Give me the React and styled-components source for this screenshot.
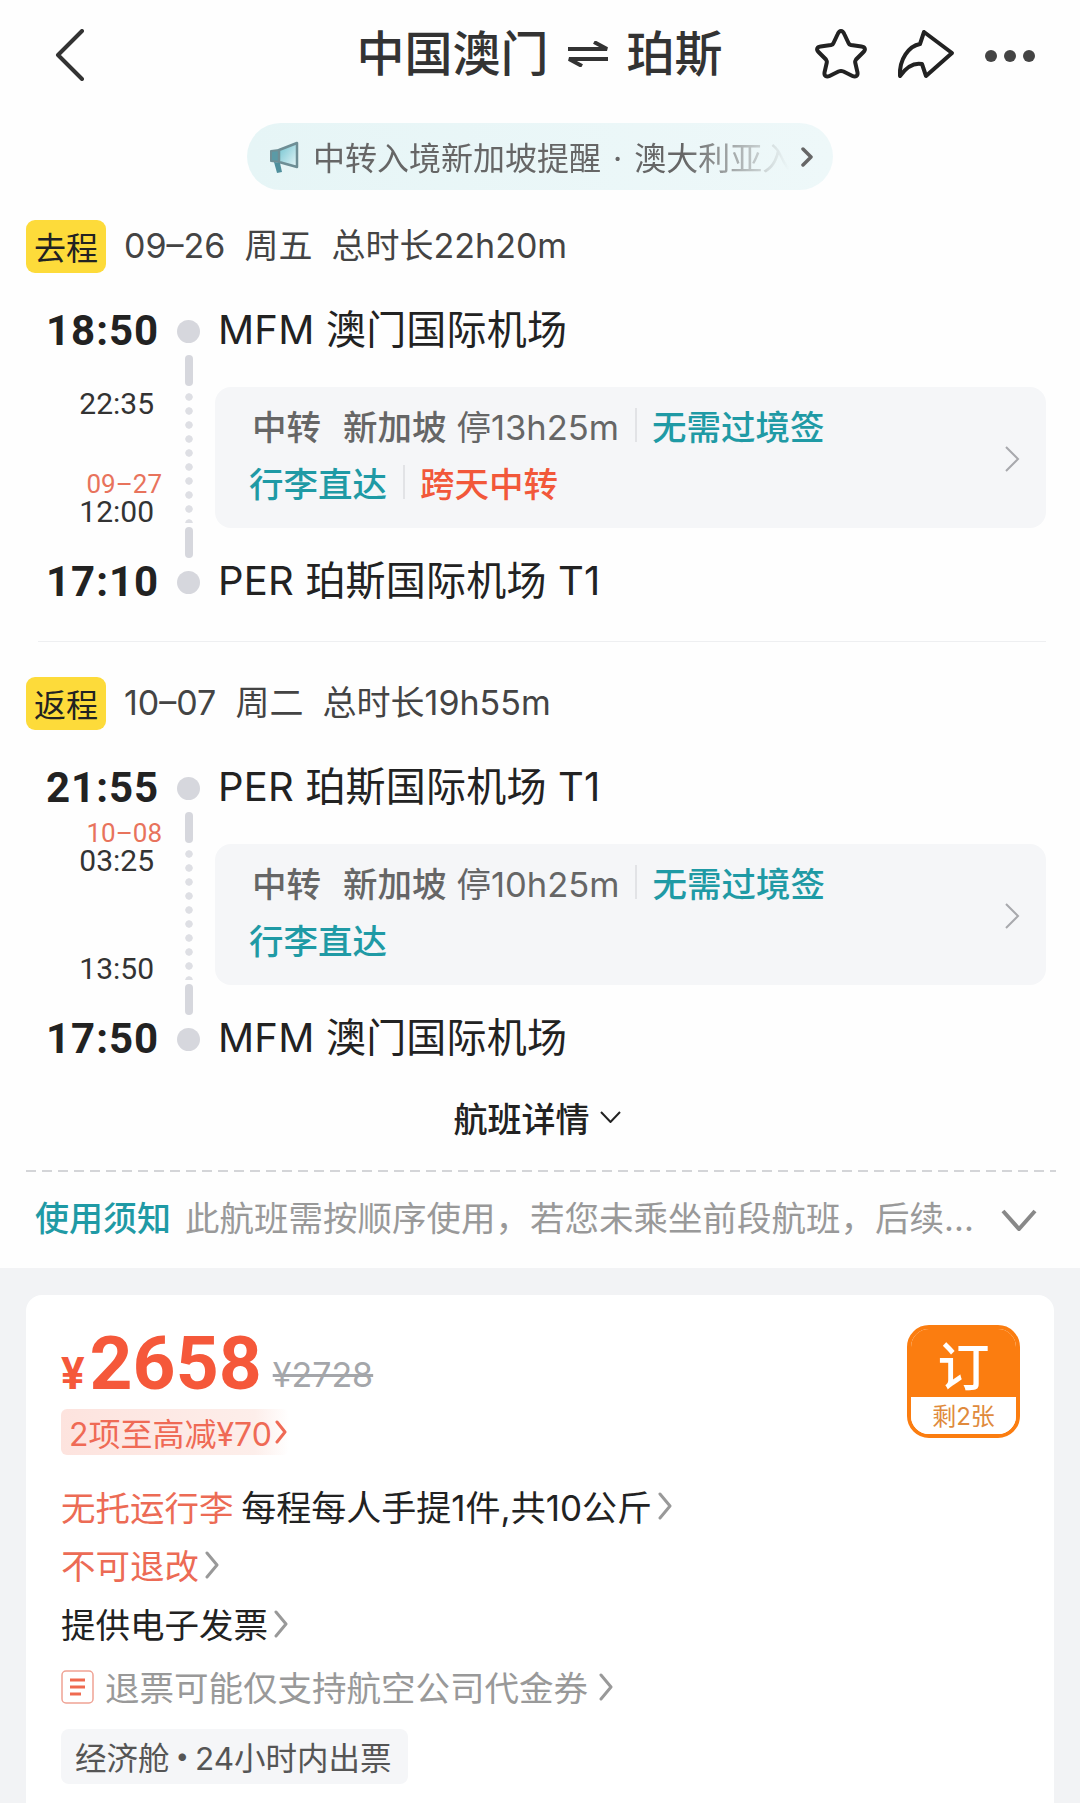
import React from "react";
import styled, { createGlobalStyle } from "styled-components";

const Global = createGlobalStyle`
  html, body { margin: 0; padding: 0; background: #fff; }
  * { box-sizing: border-box; }
  body { font-family: Inter, "Noto Sans CJK SC", sans-serif; color: #222; }
`;

const Page = styled.div`
  width: 1080px;
  height: 1803px;
  overflow: hidden;
  display: flex;
  flex-direction: column;
  background: #fefefe;
`;

const Header = styled.header`
  height: 108px;
  display: grid;
  grid-template-columns: 1fr auto 1fr;
  align-items: center;
  padding: 0 44px 0 55px;
`;
const Title = styled.h1`
  margin: 0;
  font-size: 48px;
  font-weight: 500;
  color: #333;
  line-height: 1;
  display: flex;
  align-items: center;
  gap: 18px;
  transform: translateX(-6px);
`;
const Actions = styled.div`
  display: flex;
  justify-content: flex-end;
  align-items: center;
  gap: 29px;
`;
const Notice = styled.div`
  align-self: center;
  margin-top: 15px;
  width: 586px;
  height: 67px;
  border-radius: 34px;
  background: linear-gradient(90deg, #e6f5f6, #eef8f9);
  display: flex;
  align-items: center;
  padding: 0 20px;
  gap: 12px;
`;
const NoticeText = styled.span`
  flex: 1;
  white-space: nowrap;
  overflow: hidden;
  font-size: 32px;
  color: #666;
  padding-bottom: 2px;
  -webkit-mask-image: linear-gradient(90deg, #000 78%, transparent 100%);
  mask-image: linear-gradient(90deg, #000 78%, transparent 100%);
`;
const NoticeDot = styled.span`
  margin: 0 12px;
`;
const Journey = styled.section`
  padding-top: ${(p) => p.$top}px;
`;
const DateRow = styled.div`
  display: flex;
  align-items: center;
  height: 53px;
  margin-left: 26px;
  margin-bottom: 30px;
  font-size: 34px;
  color: #444;
  white-space: pre;
`;
const DateText = styled.span`
  padding-bottom: 6px;
`;
const LegTag = styled.span`
  width: 80px;
  height: 53px;
  border-radius: 9px;
  background: #fddb3a;
  color: #222;
  font-size: 32px;
  padding-bottom: 2px;
  display: flex;
  align-items: center;
  justify-content: center;
  margin-right: 18px;
`;
const Row = styled.div`
  display: grid;
  grid-template-columns: 115px 52px 1fr;
  margin-left: 47px;
  margin-right: 34px;
`;
const StopRow = styled(Row)`
  height: 56px;
  grid-template-rows: 56px;
  align-items: center;
`;
const StopTime = styled.span`
  font-family: Roboto, sans-serif;
  font-size: 42px;
  font-weight: 700;
  letter-spacing: 1px;
  color: #222;
  line-height: 1;
  margin: 0 0 0 -1px;
`;
const Dot = styled.span`
  justify-self: center;
  width: 23px;
  height: 23px;
  border-radius: 50%;
  background: #d6d7dd;
`;
const StopName = styled.span`
  font-size: 40px;
  font-weight: 400;
  line-height: 1;
  letter-spacing: 0.2px;
  color: #222;
  padding: 0 0 2px 4px;
  white-space: nowrap;
`;
const MiddleRow = styled(Row)`
  height: 195px;
`;
const TimeColumn = styled.div`
  display: flex;
  flex-direction: column;
  justify-content: space-between;
  align-items: flex-end;
  padding: 3px 0 28px;
  font-family: Roboto, "Noto Sans CJK SC", sans-serif;
  font-size: 30px;
  line-height: 28px;
  color: #333;
`;
const TimeBlock = styled.div`
  display: flex;
  flex-direction: column;
  align-items: flex-end;
  padding-right: 8px;
`;
const DayLine = styled.span`
  font-size: 26px;
  line-height: 28px;
  height: 28px;
  color: #e8735c;
  margin-right: -8px;
`;
const Rail = styled.div`
  display: flex;
  flex-direction: column;
  align-items: center;
  margin: -4px 0 -4px 2px;
  height: 203px;
  gap: 4px;
`;
const RailSolid = styled.span`
  width: 8px;
  height: 31px;
  border-radius: 4px;
  background: #d6d7dd;
`;
const RailDots = styled.span`
  flex: 1;
  width: 8px;
  background: radial-gradient(circle, #dedfe4 3.4px, transparent 4px) center top / 8px 14px repeat-y;
`;
const Transfer = styled.div`
  align-self: start;
  height: 141px;
  margin-top: 28px;
  margin-left: 1px;
  border-radius: 16px;
  background: #f5f6f8;
  position: relative;
  padding: 9px 0 0 34px;
`;
const TransferLine = styled.div`
  display: flex;
  align-items: center;
  height: 57px;
  font-size: 34.5px;
  white-space: pre;
  color: #666;
  margin-left: ${(p) => p.$shift || 0}px;
`;
const Medium = styled.span`
  font-weight: 500;
  margin-right: ${(p) => p.$gap}px;
`;
const Teal = styled.span`
  color: #1f9aa5;
  font-weight: 500;
`;
const Hot = styled.span`
  color: #f2583a;
  font-weight: 500;
`;
const Sep = styled.i`
  width: 2px;
  height: 34px;
  background: #e2e3e6;
  margin: 0 15px 0 16px;
`;
const CardChevron = styled.svg`
  position: absolute;
  right: 26px;
  top: 59px;
`;
const Details = styled.div`
  height: 103px;
  display: flex;
  align-items: center;
  justify-content: center;
  gap: 10px;
  font-size: 34px;
  font-weight: 500;
  color: #222;
  padding: 0 0 3px;
  transform: translateX(-3px);
`;
const Divider = styled.hr`
  border: 0;
  border-top: 1px solid #eeeff1;
  margin: 0 34px 0 38px;
`;
const DashLine = styled.hr`
  border: 0;
  height: 2px;
  margin: 0 24px 0 26px;
  background: repeating-linear-gradient(90deg, #d4d5d8 0 10px, transparent 10px 16px);
`;
const Rules = styled.div`
  height: 96px;
  display: flex;
  align-items: center;
  padding: 0 43px 8px 35px;
  font-size: 34px;
  white-space: nowrap;
`;
const RulesText = styled.span`
  color: #999;
  margin-left: 14px;
  flex: 1;
  overflow: hidden;
  font-size: 34.5px;
`;
const RulesChevron = styled.svg`
  flex: none;
  margin-top: 8px;
`;
const Lower = styled.div`
  flex: 1;
  background: #f2f3f5;
  padding: 27px 26px 0;
`;
const Offer = styled.article`
  position: relative;
  height: 100%;
  background: #fff;
  border-radius: 16px 16px 0 0;
  padding: 27px 35px 0;
`;
const PriceRow = styled.div`
  display: flex;
  align-items: baseline;
  height: 82px;
  color: #f5583a;
  font-family: Roboto, sans-serif;
  font-weight: 700;
`;
const Currency = styled.span`
  font-size: 44px;
  margin-right: 5px;
`;
const Amount = styled.span`
  font-size: 75px;
  line-height: 82px;
  margin-right: 11px;
`;
const OldPrice = styled.s`
  font-family: Inter, sans-serif;
  font-size: 34px;
  font-weight: 400;
  color: #a4a6aa;
  position: relative;
  top: -2px;
`;
const Discount = styled.div`
  display: inline-flex;
  align-items: center;
  height: 46px;
  padding: 0 2px 0 8px;
  border-radius: 6px;
  margin-top: 5px;
  font-size: 32px;
  color: #ef6a55;
  background: linear-gradient(90deg, #fde3de, #fdeeea 85%, #fff);
  gap: 3px;
`;
const InfoLine = styled.div`
  display: flex;
  align-items: center;
  height: 59px;
  margin-top: ${(p) => p.$top || 0}px;
  font-size: 34.5px;
  color: ${(p) => p.$color || "#222"};
  white-space: pre;
  gap: ${(p) => p.$gap || 6}px;
`;
const InfoText = styled.span`
  padding-bottom: 1px;
`;
const Warm = styled.span`
  color: #ec6b55;
`;
const Baggage = styled.span`
  font-size: 35px;
  margin-left: -2px;
`;
const Cabin = styled.div`
  display: inline-flex;
  align-items: center;
  height: 55px;
  padding: 0 16px 2px 14px;
  margin-top: 13px;
  border-radius: 8px;
  background: #f5f6f8;
  font-size: 31.5px;
  color: #555;
`;
const Bullet = styled.span`
  margin: 0 6px;
  font-size: 24px;
`;
const BookButton = styled.div`
  position: absolute;
  top: 30px;
  right: 34px;
  width: 113px;
  height: 113px;
  border: 4px solid #fb7d10;
  border-radius: 22px;
  overflow: hidden;
  display: flex;
  flex-direction: column;
`;
const BookTop = styled.div`
  height: 68px;
  background: #fb7d10;
  color: #fff;
  font-size: 52px;
  font-weight: 500;
  display: flex;
  align-items: center;
  justify-content: center;
`;
const BookBottom = styled.div`
  flex: 1;
  background: #fff;
  color: #e08a3c;
  font-size: 24px;
  padding-bottom: 4px;
  display: flex;
  align-items: center;
  justify-content: center;
`;

const Chevron = ({ w = 14, h = 28, color = "#999", sw = 3 }) => (
  <svg width={w} height={h} viewBox={`0 0 ${w} ${h}`} fill="none" style={{ flex: "none" }}>
    <path d={`M2 2 L${w - 2} ${h / 2} L2 ${h - 2}`} stroke={color} strokeWidth={sw} strokeLinecap="round" strokeLinejoin="round" />
  </svg>
);

const Star = () => (
  <svg width="54" height="52" viewBox="0 0 54 52" fill="none">
    <path d="M27 3 C28.5 3 29.5 4 30.5 6.5 L34.5 15 Q35 16.5 37 17 L47.5 18.5 C51 19 52 21.5 49.5 24 L42 31.5 Q41 33 41.2 34.5 L43.5 44.5 C44 48 41.5 49.5 38.5 48 L29.5 43.5 Q27 42.5 24.5 43.5 L15.5 48 C12.5 49.5 10 48 10.5 44.5 L12.8 34.5 Q13 33 12 31.5 L4.5 24 C2 21.5 3 19 6.5 18.5 L17 17 Q19 16.5 19.5 15 L23.5 6.5 C24.5 4 25.5 3 27 3 Z" stroke="#222" strokeWidth="4" strokeLinejoin="round" />
  </svg>
);
const Share = () => (
  <svg width="58" height="50" viewBox="0 0 58 50" fill="none">
    <path d="M27 3 L55 24 L29 47 L25 35 C15 33 8 40 3 47 C2 30 12 17 23 15 Z" stroke="#222" strokeWidth="4" strokeLinejoin="round" />
  </svg>
);
const Dots = () => (
  <svg width="52" height="14" viewBox="0 0 52 14" style={{ marginTop: 4 }}>
    <circle cx="7" cy="7" r="6" fill="#444" />
    <circle cx="26" cy="7" r="6" fill="#444" />
    <circle cx="45" cy="7" r="6" fill="#444" />
  </svg>
);
const Megaphone = () => (
  <svg width="34" height="34" viewBox="0 0 34 34" style={{ flex: "none" }}>
    <defs>
      <linearGradient id="horn" x1="0" y1="0" x2="1" y2="1">
        <stop offset="0" stopColor="#6fc2cf" />
        <stop offset="1" stopColor="#e6f6f8" />
      </linearGradient>
    </defs>
    <path d="M4 11 L12 10 L12 22 L4 21 Z" fill="#5b9aa6" stroke="#6f8f96" strokeWidth="2" strokeLinejoin="round" />
    <path d="M12 10 L30 3 L30 27 L12 22 Z" fill="url(#horn)" stroke="#6e8e95" strokeWidth="2.5" strokeLinejoin="round" />
    <path d="M7 22 L10 33 L15 32 L13 23 Z" fill="#4f8f9c" />
  </svg>
);
const ListIcon = () => (
  <svg width="33" height="34" viewBox="0 0 33 34" style={{ flex: "none" }} fill="none">
    <rect x="1" y="1" width="31" height="32" rx="4" stroke="#efa294" strokeWidth="1.5" fill="#fff" />
    <path d="M9 10 H24 M9 17 H24 M9 24 H20" stroke="#ef6a50" strokeWidth="3" />
  </svg>
);

const Leg = ({ top, tag, date, from, to, fromTime, toTime, arr, arrDay, dep, depDay, second }) => (
  <Journey $top={top}>
    <DateRow>
      <LegTag>{tag}</LegTag>
      <DateText>{date}</DateText>
    </DateRow>
    <StopRow>
      <StopTime>{fromTime}</StopTime>
      <Dot />
      <StopName>{from}</StopName>
    </StopRow>
    <MiddleRow>
      <TimeColumn>
        <TimeBlock>
          <DayLine>{arrDay || "\u00a0"}</DayLine>
          {arr}
        </TimeBlock>
        <TimeBlock>
          {depDay && <DayLine>{depDay}</DayLine>}
          {dep}
        </TimeBlock>
      </TimeColumn>
      <Rail>
        <RailSolid />
        <RailDots />
        <RailSolid />
      </Rail>
      <Transfer>
        <TransferLine $shift={3}>
          <Medium $gap={22}>中转</Medium>
          <Medium $gap={10}>新加坡</Medium>
          停{second ? "10h25m" : "13h25m"}
          <Sep />
          <Teal>无需过境签</Teal>
        </TransferLine>
        <TransferLine>
          <Teal>行李直达</Teal>
          {!second && <Sep />}
          {!second && <Hot>跨天中转</Hot>}
        </TransferLine>
        <CardChevron width="16" height="26" viewBox="0 0 16 26" fill="none">
          <path d="M2 1 L14 13 L2 25" stroke="#a8a9ad" strokeWidth="2" />
        </CardChevron>
      </Transfer>
    </MiddleRow>
    <StopRow>
      <StopTime>{toTime}</StopTime>
      <Dot />
      <StopName>{to}</StopName>
    </StopRow>
  </Journey>
);

export default function App() {
  return (
    <Page>
      <Global />
      <Header>
        <svg width="30" height="52" viewBox="0 0 30 52" fill="none" style={{ marginTop: 2 }}>
          <path d="M27 2 L3 26 L27 50" stroke="#333" strokeWidth="4" strokeLinecap="round" strokeLinejoin="round" />
        </svg>
        <Title>
          中国澳门
          <svg width="42" height="26" viewBox="0 0 42 26" fill="none">
            <path d="M1 8 H40 L27 1 M41 18 H2 L15 25" stroke="#333" strokeWidth="4" />
          </svg>
          珀斯
        </Title>
        <Actions>
          <Star />
          <Share />
          <Dots />
        </Actions>
      </Header>
      <Notice>
        <Megaphone />
        <NoticeText>中转入境新加坡提醒<NoticeDot>·</NoticeDot>澳大利亚入境提醒</NoticeText>
        <Chevron w={12} h={20} color="#666" sw={3.5} />
      </Notice>
      <Leg
        top={30}
        tag="去程"
        date="09–26  周五  总时长22h20m"
        from="MFM 澳门国际机场"
        to="PER 珀斯国际机场 T1"
        fromTime="18:50"
        toTime="17:10"
        arr="22:35"
        depDay="09–27"
        dep="12:00"
      />
      <Journey $top={31}>
        <Divider />
      </Journey>
      <Leg
        top={35}
        tag="返程"
        date="10–07  周二  总时长19h55m"
        from="PER 珀斯国际机场 T1"
        to="MFM 澳门国际机场"
        fromTime="21:55"
        toTime="17:50"
        arrDay="10–08"
        arr="03:25"
        dep="13:50"
        second
      />
      <Details>
        航班详情
        <svg width="21" height="12" viewBox="0 0 21 12" fill="none">
          <path d="M1 1 L10.5 11 L20 1" stroke="#222" strokeWidth="2" />
        </svg>
      </Details>
      <DashLine />
      <Rules>
        <Teal>使用须知</Teal>
        <RulesText>此航班需按顺序使用，若您未乘坐前段航班，后续...</RulesText>
        <RulesChevron width="36" height="22" viewBox="0 0 36 22" fill="none">
          <path d="M2 2 L18 20 L34 2" stroke="#888" strokeWidth="4" />
        </RulesChevron>
      </Rules>
      <Lower>
        <Offer>
          <PriceRow>
            <Currency>¥</Currency>
            <Amount>2658</Amount>
            <OldPrice>¥2728</OldPrice>
          </PriceRow>
          <Discount>
            2项至高减¥70
            <Chevron w={12} h={24} color="#ef6a55" />
          </Discount>
          <InfoLine $top={21}>
            <InfoText>
              <Warm>无托运行李</Warm>
              <Baggage> 每程每人手提1件,共10公斤</Baggage>
            </InfoText>
            <Chevron />
          </InfoLine>
          <InfoLine>
            <InfoText><Warm>不可退改</Warm></InfoText>
            <Chevron />
          </InfoLine>
          <InfoLine>
            <InfoText>提供电子发票</InfoText>
            <Chevron />
          </InfoLine>
          <InfoLine $color="#999" $top={4} $gap={11}>
            <ListIcon />
            <InfoText>退票可能仅支持航空公司代金券</InfoText>
            <Chevron />
          </InfoLine>
          <Cabin>经济舱<Bullet>•</Bullet>24小时内出票</Cabin>
          <BookButton>
            <BookTop>订</BookTop>
            <BookBottom>剩2张</BookBottom>
          </BookButton>
        </Offer>
      </Lower>
    </Page>
  );
}
